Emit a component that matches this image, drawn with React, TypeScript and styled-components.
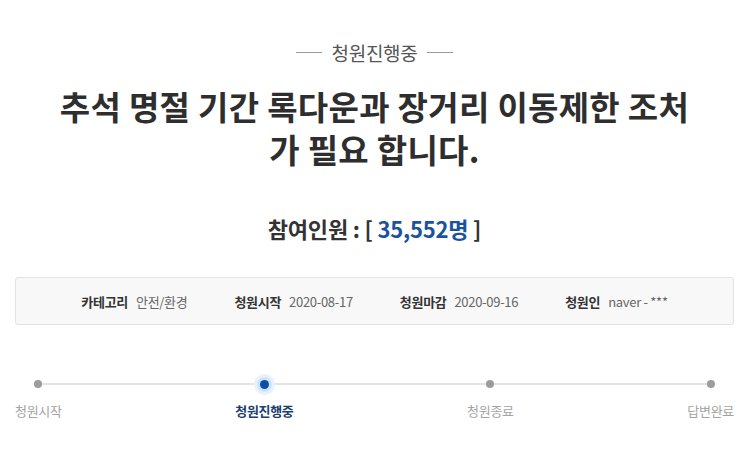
import styled, { createGlobalStyle } from 'styled-components';

const GlobalStyle = createGlobalStyle`
    html, body {
        margin: 0;
        padding: 0;
        background: #ffffff;
    }
    body {
        font-family: "Noto Sans CJK KR", "Noto Sans", sans-serif;
        color: #333333;
    }
`;

const Page = styled.div`
    width: 745px;
    box-sizing: border-box;
    padding: 40px 11px 0 15px;
    display: flex;
    flex-direction: column;
    align-items: stretch;
`;

const StatusHeader = styled.div`
    display: flex;
    justify-content: center;
    align-items: center;
    gap: 10px;
    height: 24px;
    font-size: 19px;
    letter-spacing: -0.3px;
    color: #555555;

    &::before, &::after {
        content: '';
        width: 26px;
        height: 1px;
        background: #9a9a9a;
    }
`;

const Title = styled.h1`
    margin: 21px 0 0 0;
    display: flex;
    flex-direction: column;
    align-items: center;
    font-size: 33px;
    font-weight: 700;
    letter-spacing: 0.3px;
    color: #2e2e2e;
`;

const TitleLine = styled.span`
    display: block;
    height: 43px;
    line-height: 43px;
    white-space: nowrap;
`;

const Count = styled.div`
    margin-top: 42px;
    text-align: center;
    font-size: 22px;
    line-height: 30px;
    font-weight: 700;
    letter-spacing: -0.2px;
    color: #333333;
`;

const CountNumber = styled.span`
    color: #1a52a0;
`;

const InfoBox = styled.div`
    margin-top: 34px;
    height: 48px;
    box-sizing: border-box;
    display: flex;
    justify-content: center;
    align-items: center;
    gap: 47px;
    background: #f8f8f8;
    border: 1px solid #e2e2e2;
    border-radius: 3px;
    font-size: 13px;
    letter-spacing: -0.3px;
`;

const InfoItem = styled.div`
    display: flex;
    align-items: center;
    gap: 8px;
`;

const InfoLabel = styled.span`
    font-weight: 700;
    color: #333333;
`;

const InfoValue = styled.span`
    color: #666666;
`;

const Progress = styled.div`
    position: relative;
    margin-top: 49px;
    display: flex;
    justify-content: space-between;

    &::before {
        content: '';
        position: absolute;
        left: 24px;
        right: 24px;
        top: 9px;
        height: 2px;
        background: #e3e3e3;
    }
`;

const Step = styled.div`
    position: relative;
    display: flex;
    flex-direction: column;
    align-items: center;
`;

const DotCell = styled.div`
    width: 20px;
    height: 20px;
    display: flex;
    align-items: center;
    justify-content: center;
`;

const Dot = styled.span<{ active: boolean }>`
    display: block;
    border-radius: 50%;
    ${p => p.active ? `
        width: 9px;
        height: 9px;
        background: #0b4ea6;
        box-shadow: 0 0 0 3px #cfe3fb, 0 0 0 6px #e8f2fe;
    ` : `
        width: 8px;
        height: 8px;
        background: #9c9c9c;
    `}
`;

const StepLabel = styled.span<{ active: boolean }>`
    margin-top: 8px;
    font-size: 13px;
    line-height: 18px;
    letter-spacing: -0.3px;
    white-space: nowrap;
    color: ${p => p.active ? '#1c3d70' : '#a3a3a3'};
    font-weight: ${p => p.active ? 700 : 400};
`;

const info = [
    { label: '카테고리', value: '안전/환경' },
    { label: '청원시작', value: '2020-08-17' },
    { label: '청원마감', value: '2020-09-16' },
    { label: '청원인', value: 'naver - ***' },
];

const steps = ['청원시작', '청원진행중', '청원종료', '답변완료'];
const activeStep = 1;

const App = () => {
    return (
        <Page>
            <GlobalStyle />
            <StatusHeader>청원진행중</StatusHeader>
            <Title>
                <TitleLine>추석 명절 기간 록다운과 장거리 이동제한 조처</TitleLine>
                <TitleLine>가 필요 합니다.</TitleLine>
            </Title>
            <Count>
                참여인원 : [ <CountNumber>35,552명</CountNumber> ]
            </Count>
            <InfoBox>
                {info.map(item => (
                    <InfoItem key={item.label}>
                        <InfoLabel>{item.label}</InfoLabel>
                        <InfoValue>{item.value}</InfoValue>
                    </InfoItem>
                ))}
            </InfoBox>
            <Progress>
                {steps.map((s, i) => (
                    <Step key={s}>
                        <DotCell>
                            <Dot active={i === activeStep} />
                        </DotCell>
                        <StepLabel active={i === activeStep}>{s}</StepLabel>
                    </Step>
                ))}
            </Progress>
        </Page>
    );
};

export default App;
